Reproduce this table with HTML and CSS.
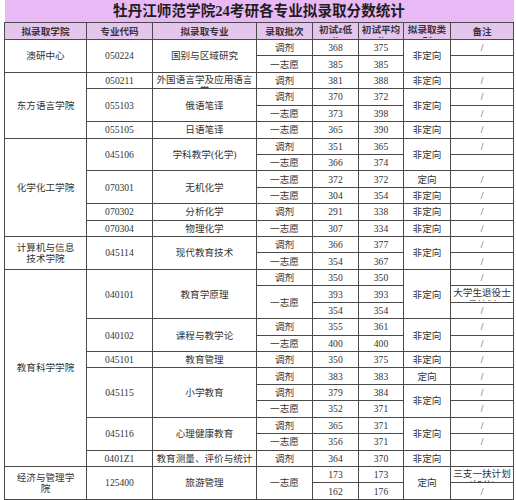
FILE: index.html
```html
<!DOCTYPE html>
<html lang="zh-CN">
<head>
<meta charset="utf-8">
<title>牡丹江师范学院24考研各专业拟录取分数统计</title>
<link rel="stylesheet" href="styles.css">
</head>
<body>
<table class="sheet">
<colgroup>
<col class="c-college"><col class="c-code"><col class="c-major"><col class="c-batch"><col class="c-min"><col class="c-avg"><col class="c-type"><col class="c-note">
</colgroup>
<thead>
<tr class="title-row"><th colspan="8">牡丹江师范学院24考研各专业拟录取分数统计</th></tr>
<tr class="head-row"><th>拟录取学院</th><th>专业代码</th><th>拟录取专业</th><th>录取批次</th><th class="top"><div class="clip">初试z低分</div></th><th class="top"><div class="clip">初试平均分</div></th><th class="top"><div class="clip">拟录取类别</div></th><th>备注</th></tr>
</thead>
<tbody>
<tr><td rowspan="2">澳研中心</td><td rowspan="2">050224</td><td rowspan="2">国别与区域研究</td><td>调剂</td><td>368</td><td>375</td><td rowspan="2">非定向</td><td>/</td></tr>
<tr><td>一志愿</td><td>385</td><td>385</td><td></td></tr>
<tr><td rowspan="4">东方语言学院</td><td>050211</td><td class="top"><div class="clip">外国语言学及应用语言学</div></td><td>调剂</td><td>381</td><td>388</td><td>非定向</td><td>/</td></tr>
<tr><td rowspan="2">055103</td><td rowspan="2">俄语笔译</td><td>调剂</td><td>370</td><td>372</td><td rowspan="2">非定向</td><td>/</td></tr>
<tr><td>一志愿</td><td>373</td><td>398</td><td>/</td></tr>
<tr><td>055105</td><td>日语笔译</td><td>一志愿</td><td>365</td><td>390</td><td>非定向</td><td>/</td></tr>
<tr><td rowspan="6">化学化工学院</td><td rowspan="2">045106</td><td rowspan="2">学科教学(化学)</td><td>调剂</td><td>351</td><td>365</td><td rowspan="2">非定向</td><td>/</td></tr>
<tr><td>一志愿</td><td>366</td><td>374</td><td></td></tr>
<tr><td rowspan="2">070301</td><td rowspan="2">无机化学</td><td>一志愿</td><td>372</td><td>372</td><td>定向</td><td>/</td></tr>
<tr><td>一志愿</td><td>304</td><td>354</td><td>非定向</td><td>/</td></tr>
<tr><td>070302</td><td>分析化学</td><td>调剂</td><td>291</td><td>338</td><td>非定向</td><td>/</td></tr>
<tr><td>070304</td><td>物理化学</td><td>一志愿</td><td>307</td><td>334</td><td>非定向</td><td>/</td></tr>
<tr><td rowspan="2">计算机与信息<br>技术学院</td><td rowspan="2">045114</td><td rowspan="2">现代教育技术</td><td>调剂</td><td>366</td><td>377</td><td rowspan="2">非定向</td><td>/</td></tr>
<tr><td>一志愿</td><td>354</td><td>367</td><td>/</td></tr>
<tr><td rowspan="12">教育科学学院</td><td rowspan="3">040101</td><td rowspan="3">教育学原理</td><td>调剂</td><td>350</td><td>350</td><td rowspan="3">非定向</td><td>/</td></tr>
<tr><td rowspan="2">一志愿</td><td>393</td><td>393</td><td class="top"><div class="clip">大学生退役士兵计划</div></td></tr>
<tr><td>354</td><td>354</td><td>/</td></tr>
<tr><td rowspan="2">040102</td><td rowspan="2">课程与教学论</td><td>调剂</td><td>355</td><td>361</td><td rowspan="2">非定向</td><td>/</td></tr>
<tr><td>一志愿</td><td>400</td><td>400</td><td>/</td></tr>
<tr><td>045101</td><td>教育管理</td><td>调剂</td><td>350</td><td>375</td><td>非定向</td><td>/</td></tr>
<tr><td rowspan="3">045115</td><td rowspan="3">小学教育</td><td>调剂</td><td>383</td><td>383</td><td>定向</td><td>/</td></tr>
<tr><td>调剂</td><td>379</td><td>384</td><td rowspan="2">非定向</td><td>/</td></tr>
<tr><td>一志愿</td><td>352</td><td>371</td><td>/</td></tr>
<tr><td rowspan="2">045116</td><td rowspan="2">心理健康教育</td><td>调剂</td><td>365</td><td>371</td><td rowspan="2">非定向</td><td>/</td></tr>
<tr><td>一志愿</td><td>356</td><td>371</td><td>/</td></tr>
<tr><td>0401Z1</td><td>教育测量、评价与统计</td><td>调剂</td><td>364</td><td>370</td><td>非定向</td><td></td></tr>
<tr><td rowspan="2">经济与管理学<br>院</td><td rowspan="2">125400</td><td rowspan="2">旅游管理</td><td rowspan="2">一志愿</td><td>173</td><td>173</td><td rowspan="2">定向</td><td class="top"><div class="clip">三支一扶计划(加分)</div></td></tr>
<tr><td>162</td><td>176</td><td>/</td></tr>
</tbody>
</table>
</body>
</html>
```
FILE: styles.css
```css
html, body {
  margin: 0;
  padding: 0;
  background: #ffffff;
}

body {
  font-family: "Liberation Serif", "Noto Sans CJK SC", serif;
  font-size: 9.6px;
  color: #333333;
}

.sheet {
  margin-left: 4px;
  width: 509px;
  border-collapse: collapse;
  table-layout: fixed;
}

.c-college { width: 82px; }
.c-code { width: 66px; }
.c-major { width: 104px; }
.c-batch { width: 56px; }
.c-min { width: 46px; }
.c-avg { width: 45px; }
.c-type { width: 47px; }
.c-note { width: 63px; }

.sheet th,
.sheet td {
  border: 1px solid #4a4a4a;
  padding: 0 2px;
  text-align: center;
  vertical-align: middle;
  line-height: 11px;
  font-weight: normal;
  white-space: nowrap;
}

.title-row th {
  height: 22px;
  background: #e8b9f4;
  border-top: none;
  border-left: none;
  border-right: none;
  font-size: 14.6px;
  font-weight: bold;
  color: #1e1e1e;
  line-height: 22px;
}

.head-row th {
  height: 16px;
  background: #e4c5ec;
  font-weight: bold;
  color: #3a3340;
}

.sheet tbody tr {
  height: 16.43px;
}

.sheet .top {
  vertical-align: top;
  white-space: normal;
}

.clip {
  height: 14px;
  overflow: hidden;
  padding-top: 1px;
  line-height: 11.5px;
}
```
